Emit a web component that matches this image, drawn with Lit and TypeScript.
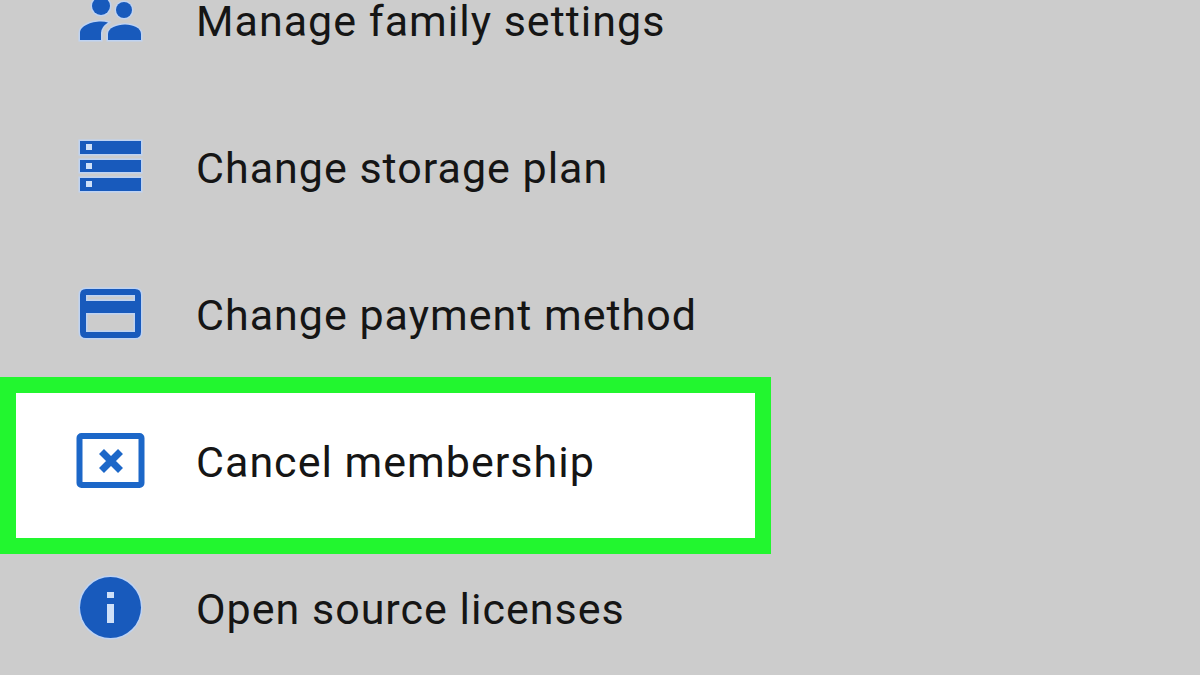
import { LitElement, html, css, svg } from "lit";
import { customElement } from "lit/decorators.js";
import { classMap } from "lit/directives/class-map.js";

const family = svg`
  <g class="fill halo">
    <circle cx="27" cy="23" r="9"/>
    <circle cx="50" cy="27" r="8"/>
    <path d="M6 57V50C6 43 17 38.500 27 38.500Q31 38.500 34 39.500Q27 44 27 50V57Z"/>
    <path d="M34 57V51C34 45 43 41.500 51 41.500S67 45 67 51V57Z"/>
  </g>`;

const storage = svg`
  <g class="fill halo">
    <rect x="6" y="11" width="61" height="13"/>
    <rect x="6" y="30" width="61" height="12"/>
    <rect x="6" y="48" width="61" height="13"/>
  </g>
  <g class="light">
    <rect x="12" y="14" width="6" height="6"/>
    <rect x="12" y="33" width="6" height="6"/>
    <rect x="12" y="51" width="6" height="6"/>
  </g>`;

const card = svg`
  <path class="fill halo" fill-rule="evenodd" d="M12 12H61Q67 12 67 18V55Q67 61 61 61H12Q6 61 6 55V18Q6 12 12 12ZM12 18V24H61V18ZM12 36V55H61V36Z"/>`;

const cancel = svg`
  <g class="line">
    <rect x="5.500" y="12" width="62" height="49" rx="2"/>
    <path class="cross" d="M27.500 27.500L46.500 46.500M46.500 27.500L27.500 46.500"/>
  </g>`;

const info = svg`
  <circle class="fill halo" cx="36.500" cy="36.500" r="30.500"/>
  <g class="light">
    <rect x="33" y="21" width="7" height="6"/>
    <rect x="33" y="33" width="7" height="19"/>
  </g>`;

const items = [
  { label: "Manage family settings", icon: family },
  { label: "Change storage plan", icon: storage },
  { label: "Change payment method", icon: card },
  { label: "Cancel membership", icon: cancel, marked: true },
  { label: "Open source licenses", icon: info },
];

@customElement("app-root")
export class AppRoot extends LitElement {
  static styles = css`
    :host {
      display: block;
      height: 100vh;
      overflow: hidden;
      background: #cccccc;
      color: #151515;
      font-family: Roboto, sans-serif;
    }
    .menu {
      list-style: none;
      margin: -48px 0 0;
      padding: 0;
    }
    .item {
      height: 147px;
    }
    .action {
      display: flex;
      align-items: center;
      gap: 48px;
      box-sizing: border-box;
      width: 100%;
      height: 100%;
      padding: 0 0 11px 74px;
      border: 0;
      background: none;
      color: inherit;
      font: inherit;
      font-size: 43px;
      line-height: 40px;
      letter-spacing: 1px;
      text-align: left;
      white-space: nowrap;
      cursor: pointer;
    }
    .marked {
      position: relative;
      box-sizing: border-box;
      height: 145px;
      width: 739px;
      max-width: calc(100% - 32px);
      margin: 0 16px 2px;
      background: #ffffff;
      box-shadow: 0 0 0 16px #22f62f;
    }
    .marked .action {
      padding: 0 0 9px 58px;
    }
    .icon {
      flex: none;
      width: 74px;
      height: 74px;
    }
    .label {
      padding-top: 2px;
    }
    .fill {
      fill: #185abc;
    }
    .halo {
      stroke: #bfd3f2;
      stroke-width: 3px;
      paint-order: stroke;
    }
    .light {
      fill: #cfe0f8;
    }
    .line {
      fill: none;
      stroke: #1c67c8;
      stroke-width: 6px;
    }
    .cross {
      stroke-width: 7px;
    }
  `;

  render() {
    return html`
      <ul class="menu">
        ${items.map(
          (item) => html`
            <li class=${classMap({ item: true, marked: !!item.marked })}>
              <button class="action" type="button">
                <svg class="icon" viewBox="0 0 74 74" aria-hidden="true">${item.icon}</svg>
                <span class="label">${item.label}</span>
              </button>
            </li>
          `
        )}
      </ul>
    `;
  }
}
